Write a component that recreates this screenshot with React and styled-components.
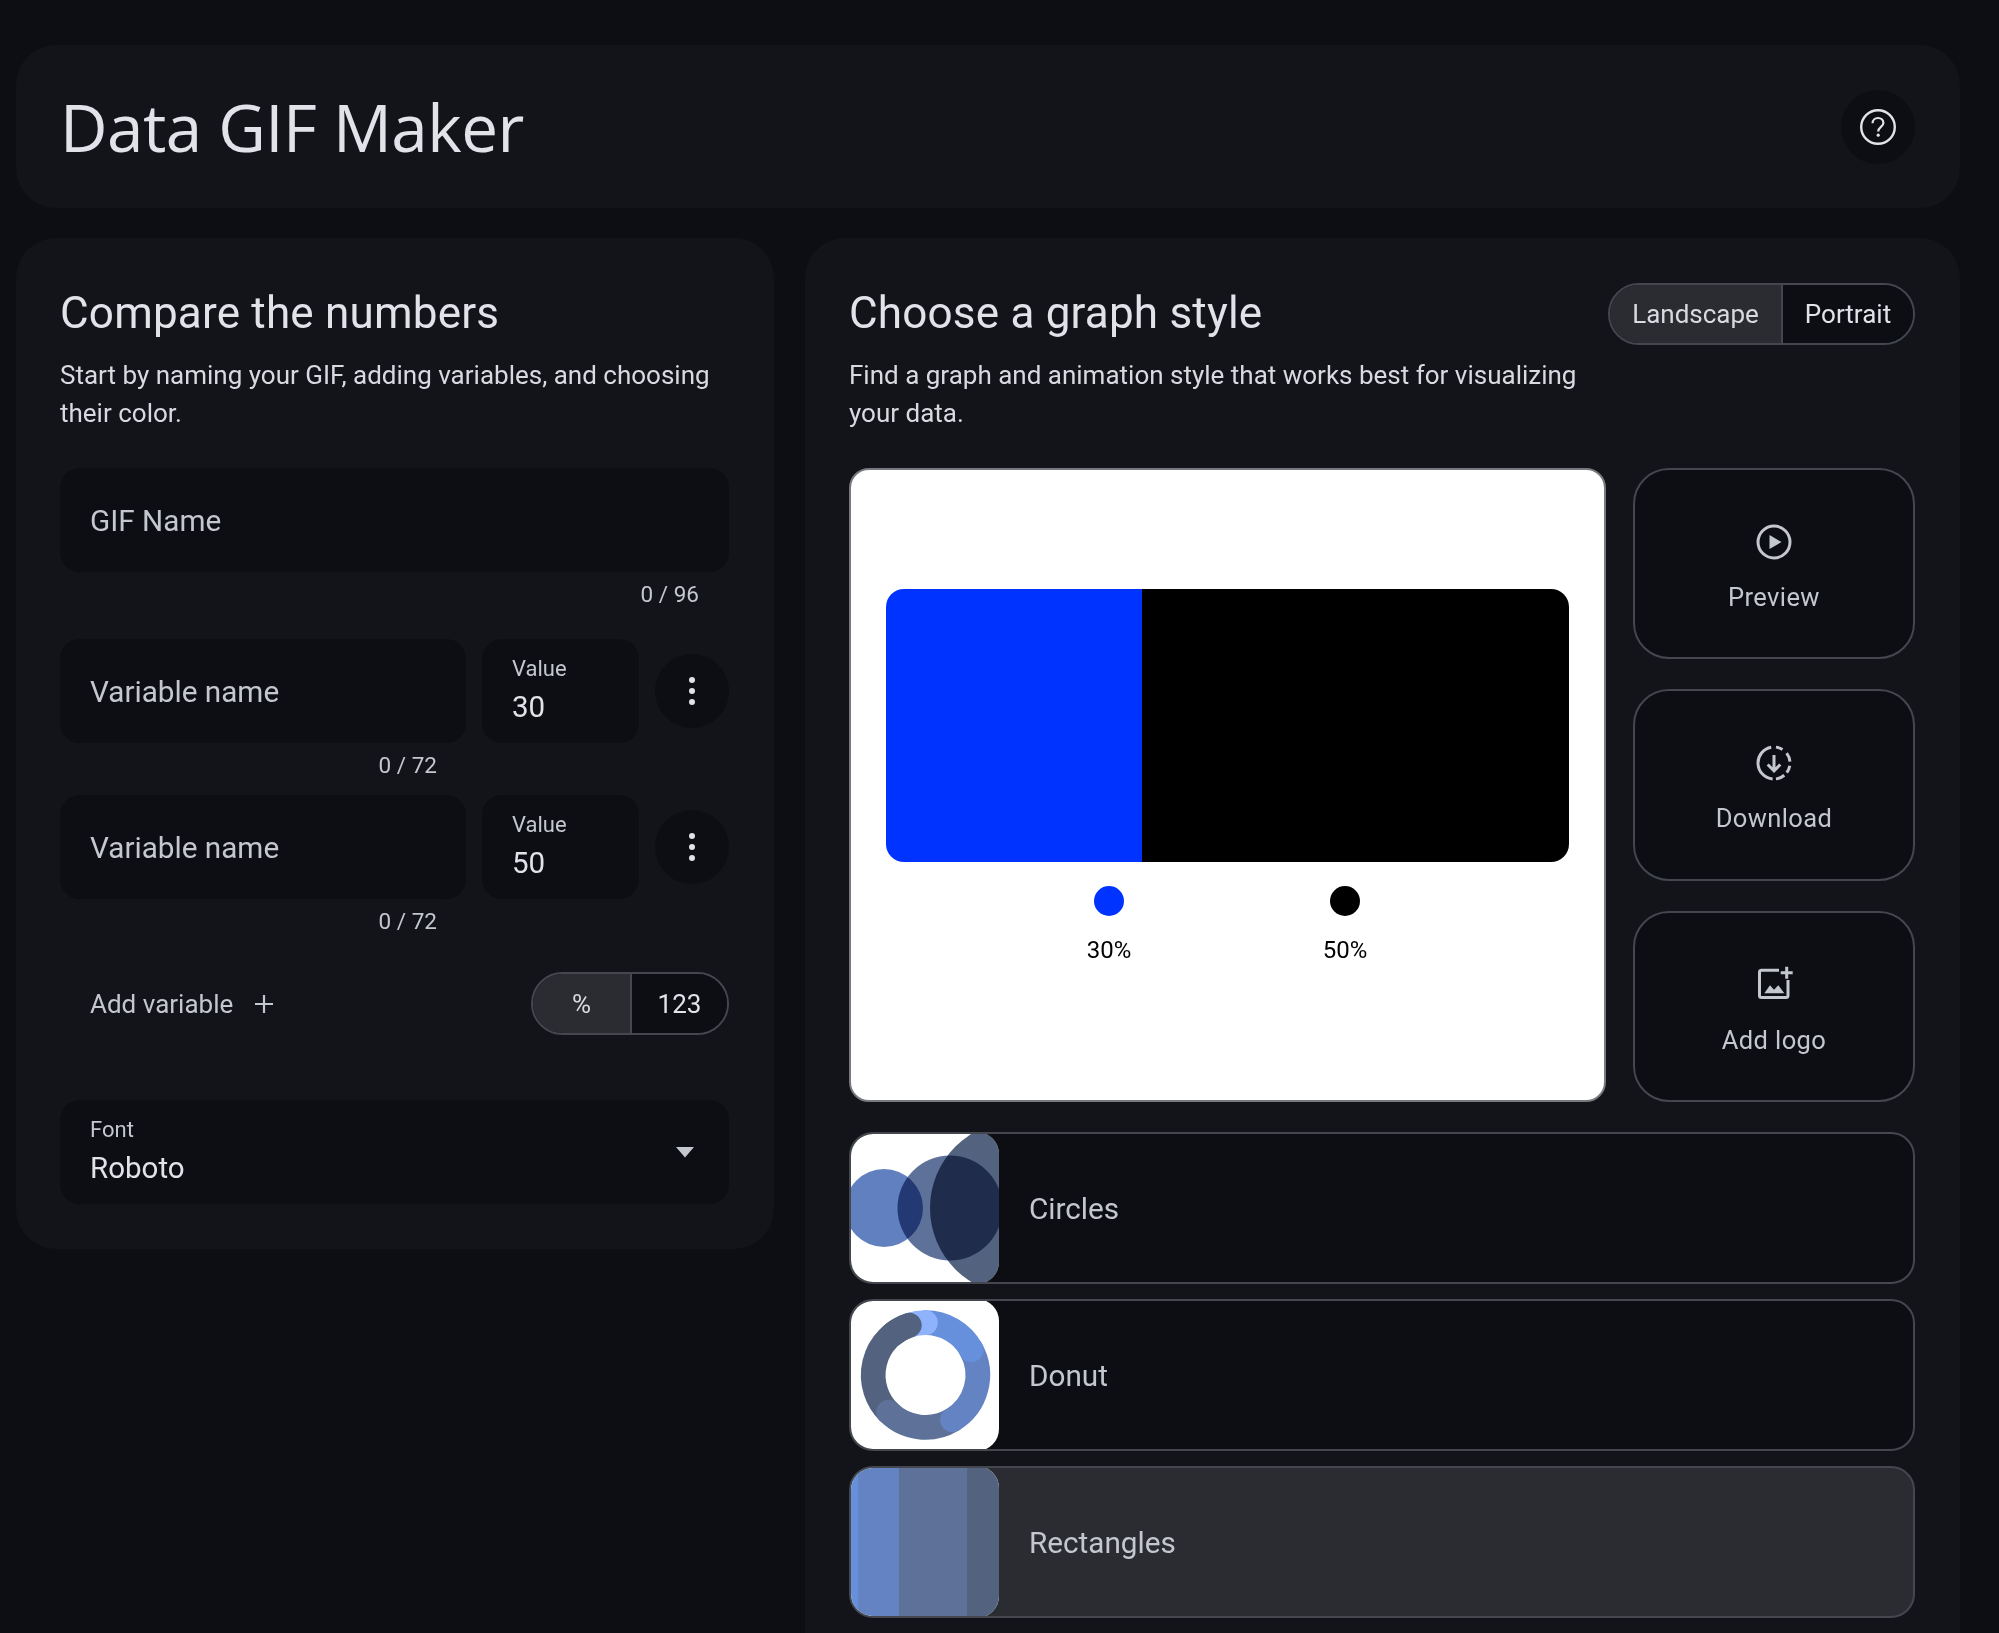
import React from "react";
import styled, { createGlobalStyle } from "styled-components";

const Global = createGlobalStyle`
  html, body { margin: 0; padding: 0; background: #0c0e13; }
  body { font-family: Roboto, "Liberation Sans", sans-serif; overflow: hidden; }
  * { box-sizing: border-box; }
`;

const Page = styled.div`
  width: 1999px; height: 1633px; overflow: hidden; background: #0c0e13;
  padding: 45px 39px 0 16px; display: flex; flex-direction: column; gap: 30px;
`;
const Header = styled.header`
  height: 163px; flex: none; background: #12141a; border-radius: 40px;
  display: flex; align-items: center; justify-content: space-between; padding: 0 45px 0 44px;
`;
const AppTitle = styled.h1`
  margin: 0; font-family: "Open Sans", Roboto, sans-serif; font-weight: 400; font-size: 65.5px;
  line-height: 1; color: #e2e2e9; letter-spacing: -0.5px;
`;
const RoundButton = styled.div`
  width: ${p => p.$size}px; height: ${p => p.$size}px; flex: none; border-radius: 50%;
  background: #0c0e13; display: flex; align-items: center; justify-content: center; color: #e2e2e9;
`;
const Columns = styled.div`display: flex; gap: 31px; align-items: flex-start; flex: 1; min-height: 0;`;
const Panel = styled.section`
  background: #12141a; border-radius: 40px 40px ${p => p.$open ? "0 0" : "40px 40px"};
  padding: 45px 45px 45px 44px; width: ${p => p.$width}px; flex: none; height: ${p => p.$open ? "100%" : "auto"};
`;
const SectionTitle = styled.h2`
  margin: 0; height: 56px; font-weight: 400; font-size: 44px; line-height: 60px; color: #e2e2e9; letter-spacing: .2px;
`;
const Description = styled.p`
  margin: 18px 0 36px; font-size: 26px; line-height: 37.5px; color: #d8dae0; width: ${p => p.$width}px;
`;
const Field = styled.div`
  height: 104px; border-radius: 20px; background: #0c0e13; padding: 0 30px;
  display: flex; align-items: center; justify-content: space-between; flex: ${p => p.$fill ? 1 : "none"};
  width: ${p => p.$width ? p.$width + "px" : "auto"};
  color: #c4c7ce; font-size: 29.7px;
`;
const FieldStack = styled.div`display: flex; flex-direction: column; justify-content: center; gap: 7px; padding-bottom: 2px;`;
const FieldLabel = styled.div`font-size: 22px; line-height: 26px; color: #c4c7ce;`;
const FieldValue = styled.div`font-size: 29.5px; line-height: 36px; color: #e2e2e9;`;
const Counter = styled.div`
  height: 44px; line-height: 44px; font-size: 22.5px; color: #c4c7ce; text-align: right;
  padding-right: ${p => p.$right}px; margin-bottom: ${p => p.$after}px;
`;
const VarRow = styled.div`display: flex; align-items: center; gap: 16px;`;
const AddRow = styled.div`display: flex; align-items: center; justify-content: space-between; height: 63px; margin: 29px 0 65px;`;
const AddButton = styled.div`display: flex; align-items: center; gap: 21px; padding-left: 30px; font-size: 26px; color: #c4c7ce;`;
const Segments = styled.div`
  display: flex; height: ${p => p.$height}px; border: 2px solid #44474d; border-radius: 32px; overflow: hidden; flex: none;
`;
const Segment = styled.div`
  width: ${p => p.$width}px; display: flex; align-items: center; justify-content: center;
  background: ${p => p.$active ? "#2a2c31" : "#0c0e13"}; color: ${p => p.$active ? "#d8dae0" : "#e2e2e9"};
  font-size: 26px;
  & + & { border-left: 2px solid #44474d; }
`;
const TitleRow = styled.div`display: flex; justify-content: space-between; align-items: flex-start; height: 56px;`;
const Stage = styled.div`display: flex; gap: 27px; height: 634px;`;
const PreviewCard = styled.div`
  width: 757px; flex: none; background: #fff; border-radius: 20px; border: 2px solid #77797e;
  padding: 119px 35px 0; display: flex; flex-direction: column;
`;
const Bar = styled.div`height: 273px; display: flex; border-radius: 18px; overflow: hidden; flex: none;`;
const BarPart = styled.div`flex: ${p => p.$grow}; background: ${p => p.$color};`;
const Legend = styled.div`display: flex; padding-left: 193px; gap: 176px; margin-top: 24px;`;
const LegendItem = styled.div`width: 60px; display: flex; flex-direction: column; align-items: center; gap: 18px;`;
const Dot = styled.div`width: 30px; height: 30px; border-radius: 50%; background: ${p => p.$color};`;
const LegendText = styled.div`font-size: 24px; line-height: 32px; color: #000;`;
const Actions = styled.div`flex: 1; display: flex; flex-direction: column; gap: 30px;`;
const ActionCard = styled.div`
  flex: 1; border: 2px solid #44474d; border-radius: 36px; background: #0c0e13; padding-top: 8px;
  display: flex; flex-direction: column; align-items: center; justify-content: center; gap: 21px;
  color: #c4c7ce; font-size: 25.5px; letter-spacing: .4px;
`;
const ActionIcon = styled.svg`width: 38px; height: 38px; display: block;`;
const StyleList = styled.div`display: flex; flex-direction: column; gap: 15px; margin-top: 30px;`;
const StyleRow = styled.div`
  height: 152px; border: 2px solid #44474d; border-radius: 24px; overflow: hidden;
  background: ${p => p.$active ? "#2a2c31" : "#0c0e13"}; display: flex; align-items: center; gap: 30px;
  color: #c4c7ce; font-size: 29.7px;
`;
const Thumb = styled.svg`
  width: 149px; height: 152px; flex: none; display: block; background: #fff; border-radius: 22px; margin-left: -1px;
`;
const BlendCircle = styled.circle`mix-blend-mode: multiply;`;
const Caret = styled.svg`width: 20px; height: 11px; margin-right: 4px; display: block;`;

const CX = 75.5, CY = 76, R = 52.3;
const pt = a => {
  const t = (a - 90) * Math.PI / 180;
  return [CX + R * Math.cos(t), CY + R * Math.sin(t)];
};
const arc = (a, b) => {
  const [x1, y1] = pt(a), [x2, y2] = pt(b);
  return `M${x1} ${y1}A${R} ${R} 0 ${b - a > 180 ? 1 : 0} 1 ${x2} ${y2}`;
};
const Seg = ({ from, to, color }) => (
  <path d={arc(from, to)} fill="none" stroke={color} strokeWidth="24.7" strokeLinecap="round" />
);

const CirclesThumb = () => (
  <Thumb viewBox="0 0 149 152">
    <BlendCircle cx="34" cy="76" r="39" fill="#6080bf" />
    <BlendCircle cx="100" cy="76" r="52.5" fill="#5d7199" />
    <BlendCircle cx="167" cy="76" r="87" fill="#53637f" />
  </Thumb>
);
const DonutThumb = () => (
  <Thumb viewBox="0 0 149 152">
    <Seg from={225} to={342} color="#53637f" />
    <Seg from={149} to={225} color="#5d7199" />
    <Seg from={61} to={149} color="#6483c3" />
    <Seg from={0} to={61} color="#6690dc" />
    <Seg from={-18} to={0} color="#8fb2fd" />
    <Seg from={-40} to={-18} color="#53637f" />
  </Thumb>
);
const RectThumb = () => (
  <Thumb viewBox="0 0 149 152">
    <rect x="0" y="0" width="8" height="152" fill="#6690dc" />
    <rect x="8" y="0" width="41" height="152" fill="#6483c3" />
    <rect x="49" y="0" width="68" height="152" fill="#5d7199" />
    <rect x="117" y="0" width="32" height="152" fill="#53637f" />
  </Thumb>
);

const HelpIcon = () => (
  <svg width="38" height="38" viewBox="0 0 38 38" fill="none" stroke="currentColor" strokeWidth="2.4">
    <circle cx="19" cy="19" r="16.8" />
    <path d="M13.6 15.2c0-3 2.3-5.2 5.4-5.2s5.4 2.1 5.4 4.9c0 3.9-5.2 4.1-5.2 8.6" strokeWidth="2.2" />
    <circle cx="19.2" cy="27.2" r="1.6" fill="currentColor" stroke="none" />
  </svg>
);
const MoreIcon = () => (
  <svg width="8" height="30" viewBox="0 0 8 30" fill="#e2e2e9">
    <circle cx="4" cy="4" r="3" /><circle cx="4" cy="15" r="3" /><circle cx="4" cy="26" r="3" />
  </svg>
);
const PlusIcon = () => (
  <svg width="20" height="20" viewBox="0 0 20 20" stroke="#c4c7ce" strokeWidth="2.2"><path d="M10 1v18M1 10h18" /></svg>
);
const CaretIcon = () => (
  <Caret viewBox="0 0 20 11" fill="#c4c7ce"><path d="M1 0h18l-9 10.5z" /></Caret>
);
const PlayIcon = () => (
  <ActionIcon viewBox="0 0 38 38" fill="none" stroke="currentColor" strokeWidth="3">
    <circle cx="19" cy="19" r="16" />
    <path d="M14.5 12v14L26.5 19z" fill="currentColor" stroke="none" />
  </ActionIcon>
);
const DownloadIcon = () => (
  <ActionIcon viewBox="0 0 38 38" fill="none" stroke="currentColor" strokeWidth="3">
    <path d="M20.95 3.12A16 16 0 0 1 27.48 5.43M31.61 9.15A16 16 0 0 1 34.94 17.61M34.76 21.78A16 16 0 0 1 31.78 28.63M29.28 31.26A16 16 0 0 1 20.95 34.88M17.61 34.94A16 16 0 0 1 16.22 3.24" />
    <path d="M19 11v15M12.7 20.5L19 26.8l6.3-6.3" />
  </ActionIcon>
);
const LogoIcon = () => (
  <ActionIcon viewBox="0 0 38 38" fill="none" stroke="currentColor" strokeWidth="3">
    <path d="M24 4.2H6.5a2 2 0 0 0-2 2V29.5a2 2 0 0 0 2 2H31a2 2 0 0 0 2-2V14" />
    <path d="M31.7 0.7v12M25.7 6.7h12" />
    <path d="M9.3 27.3l5.7-8 4 4.5 4.3-4.5 6 8z" fill="currentColor" stroke="none" />
  </ActionIcon>
);

export default function App() {
  return (
    <Page>
      <Global />
      <Header>
        <AppTitle>Data GIF Maker</AppTitle>
        <RoundButton $size={74}><HelpIcon /></RoundButton>
      </Header>
      <Columns>
        <Panel $width={758}>
          <SectionTitle>Compare the numbers</SectionTitle>
          <Description $width={668}>Start by naming your GIF, adding variables, and choosing their color.</Description>
          <Field>GIF Name</Field>
          <Counter $right={30} $after={23}>0 / 96</Counter>
          <VarRow>
            <Field $fill>Variable name</Field>
            <Field $width={157}>
              <FieldStack><FieldLabel>Value</FieldLabel><FieldValue>30</FieldValue></FieldStack>
            </Field>
            <RoundButton $size={74}><MoreIcon /></RoundButton>
          </VarRow>
          <Counter $right={292} $after={8}>0 / 72</Counter>
          <VarRow>
            <Field $fill>Variable name</Field>
            <Field $width={157}>
              <FieldStack><FieldLabel>Value</FieldLabel><FieldValue>50</FieldValue></FieldStack>
            </Field>
            <RoundButton $size={74}><MoreIcon /></RoundButton>
          </VarRow>
          <Counter $right={292} $after={0}>0 / 72</Counter>
          <AddRow>
            <AddButton>Add variable<PlusIcon /></AddButton>
            <Segments $height={63}>
              <Segment $active $width={97}>%</Segment>
              <Segment $width={97}>123</Segment>
            </Segments>
          </AddRow>
          <Field>
            <FieldStack><FieldLabel>Font</FieldLabel><FieldValue>Roboto</FieldValue></FieldStack>
            <CaretIcon />
          </Field>
        </Panel>
        <Panel $width={1155} $open>
          <TitleRow>
            <SectionTitle>Choose a graph style</SectionTitle>
            <Segments $height={62}>
              <Segment $active $width={171}>Landscape</Segment>
              <Segment $width={132}>Portrait</Segment>
            </Segments>
          </TitleRow>
          <Description $width={760}>Find a graph and animation style that works best for visualizing your data.</Description>
          <Stage>
            <PreviewCard>
              <Bar>
                <BarPart $grow={256} $color="#0033ff" />
                <BarPart $grow={427} $color="#000" />
              </Bar>
              <Legend>
                <LegendItem><Dot $color="#0033ff" /><LegendText>30%</LegendText></LegendItem>
                <LegendItem><Dot $color="#000" /><LegendText>50%</LegendText></LegendItem>
              </Legend>
            </PreviewCard>
            <Actions>
              <ActionCard><PlayIcon />Preview</ActionCard>
              <ActionCard><DownloadIcon />Download</ActionCard>
              <ActionCard><LogoIcon />Add logo</ActionCard>
            </Actions>
          </Stage>
          <StyleList>
            <StyleRow><CirclesThumb />Circles</StyleRow>
            <StyleRow><DonutThumb />Donut</StyleRow>
            <StyleRow $active><RectThumb />Rectangles</StyleRow>
          </StyleList>
        </Panel>
      </Columns>
    </Page>
  );
}
